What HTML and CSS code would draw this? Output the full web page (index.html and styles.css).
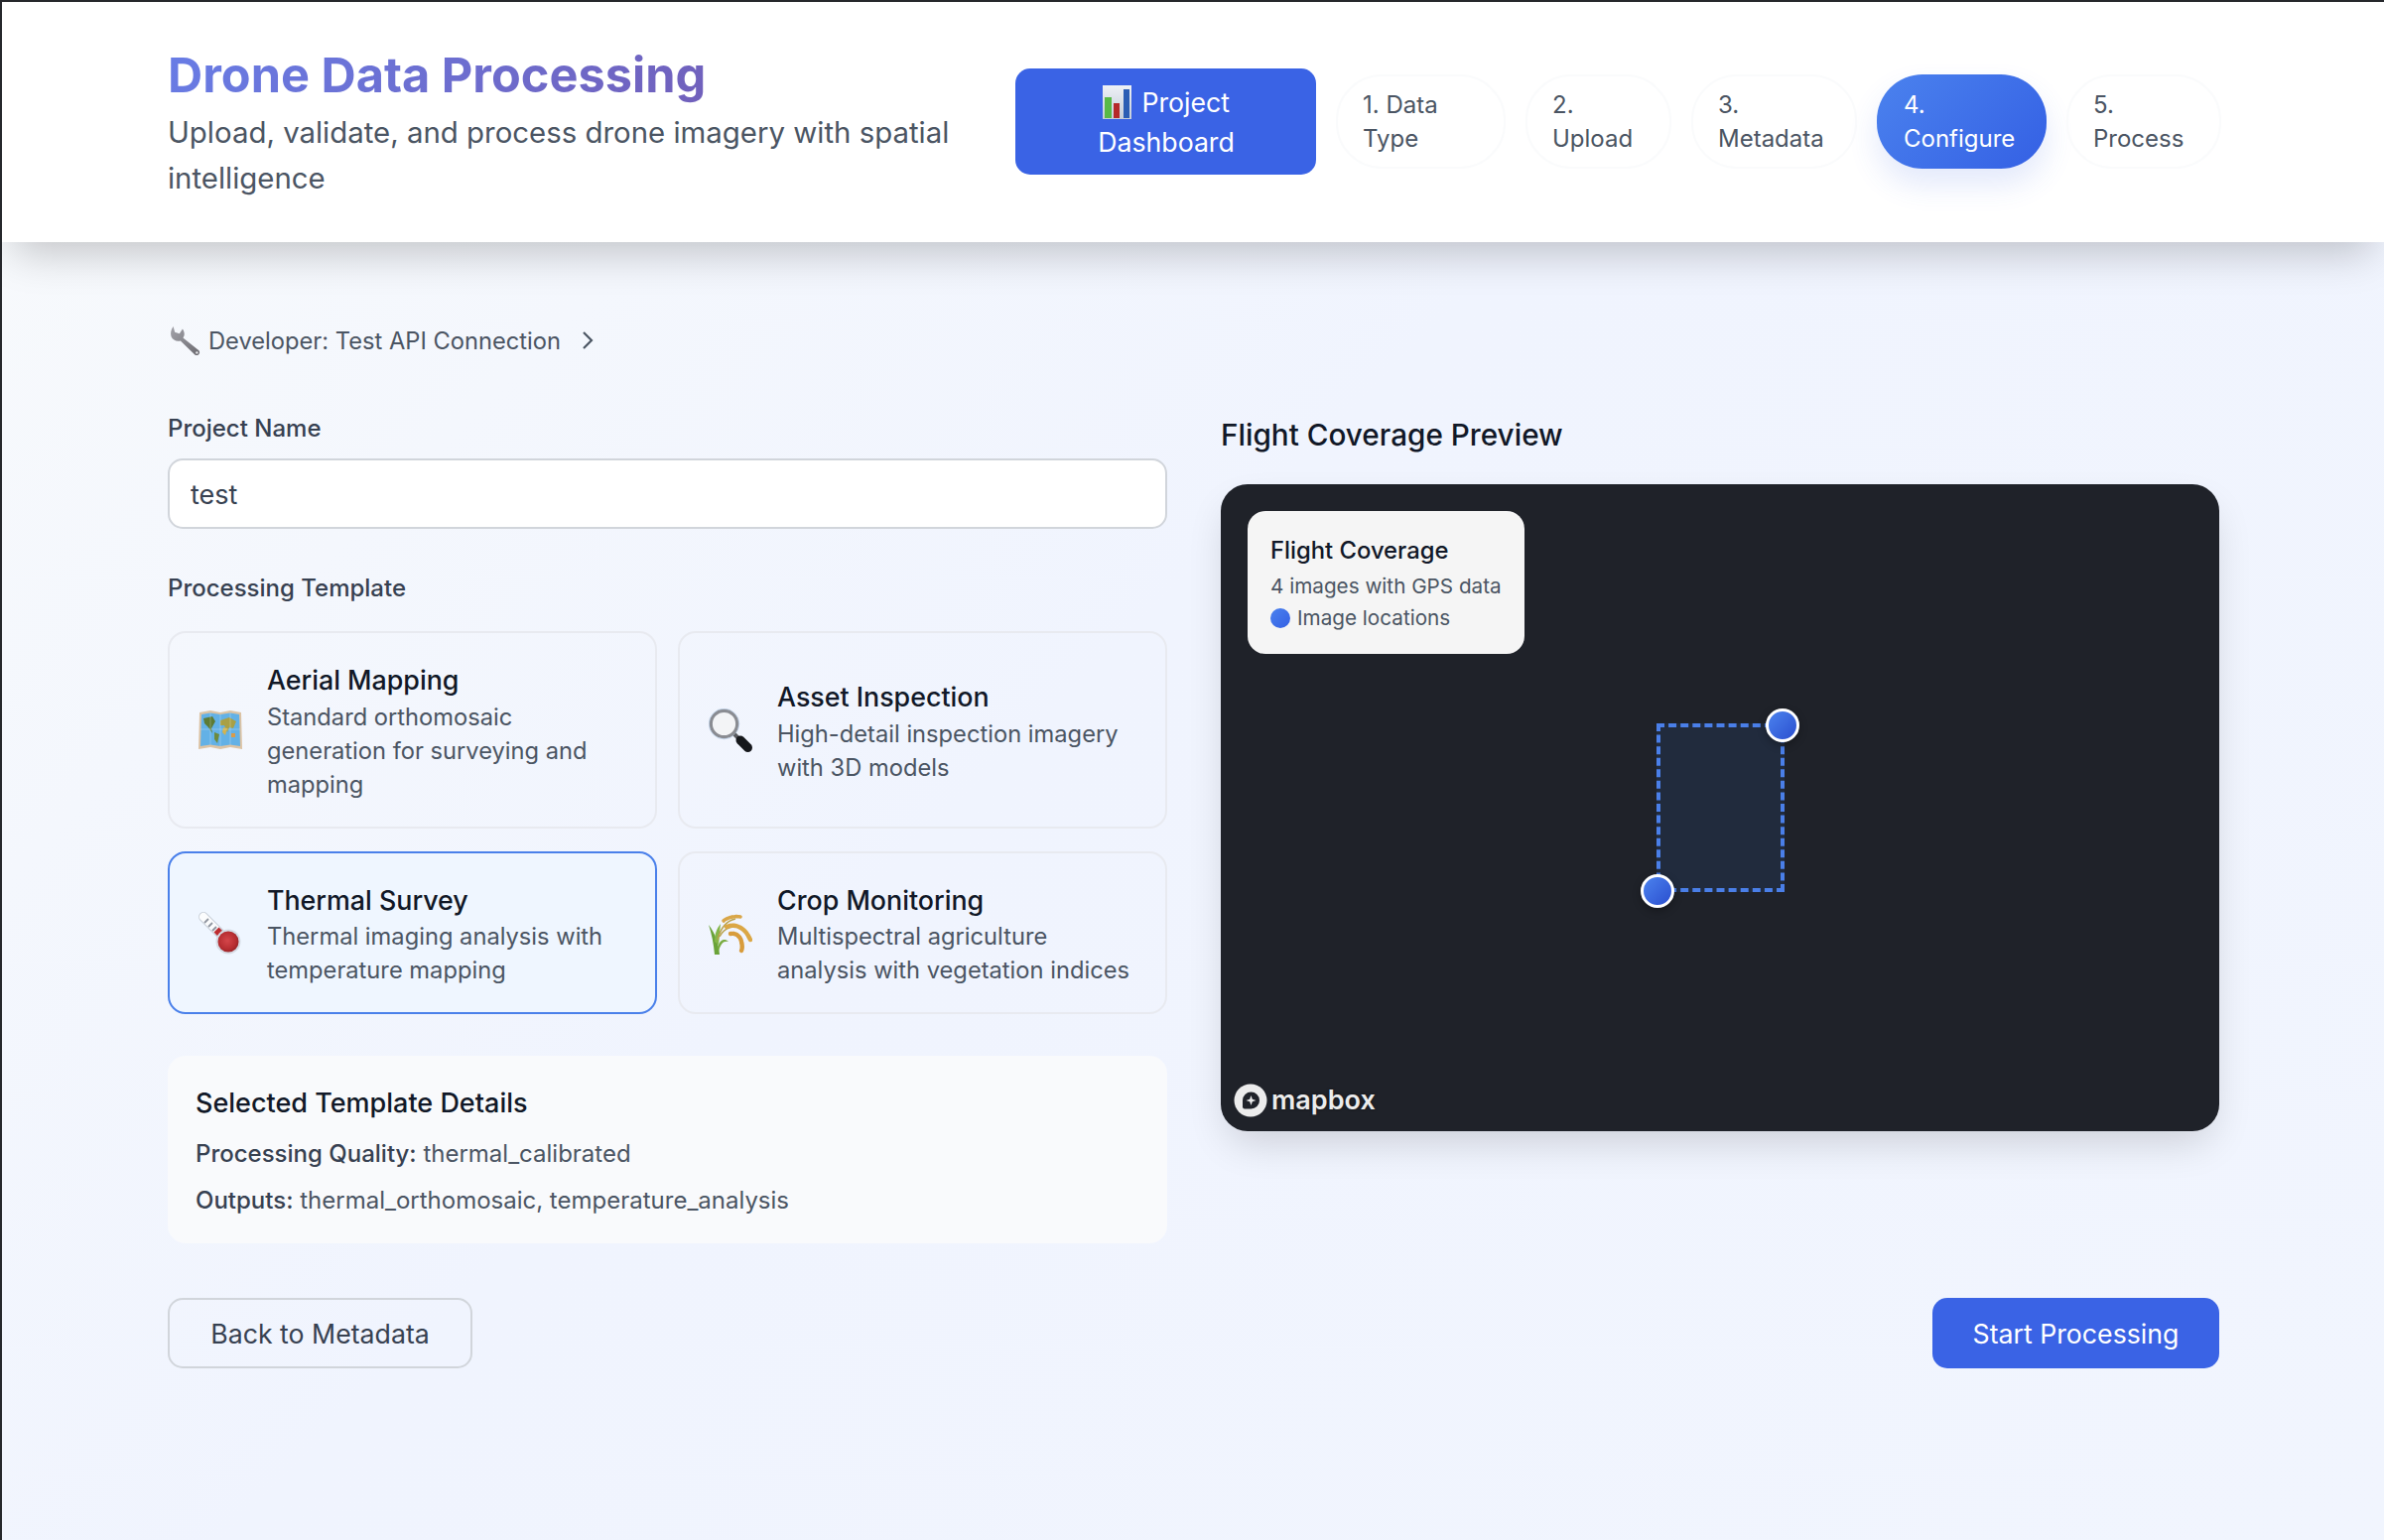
FILE: index.html
```html
<!DOCTYPE html>
<html lang="en">
<head>
    <meta charset="UTF-8">
    <meta name="viewport" content="width=device-width, initial-scale=1.0">
    <title>Drone Data Processing</title>
    <link rel="stylesheet" href="styles.css">
</head>
<body>

<header class="top-bar">
    <div class="brand">
        <h1>Drone Data Processing</h1>
        <p>Upload, validate, and process drone imagery with spatial intelligence</p>
    </div>
    <nav class="steps">
        <a class="dashboard-btn" href="#">
            <svg class="icon-chart" viewBox="0 0 29 34">
                <defs>
                    <linearGradient id="chartBg" x1="0" y1="0" x2="0" y2="1">
                        <stop offset="0" stop-color="#eef1f6"/>
                        <stop offset="1" stop-color="#c3ccd9"/>
                    </linearGradient>
                </defs>
                <rect width="29" height="34" fill="url(#chartBg)"/>
                <rect x="2" y="12" width="7" height="21" fill="#58b947"/>
                <rect x="11" y="18" width="6" height="15" fill="#b5282a"/>
                <rect x="21" y="4" width="6" height="29" fill="#2b5db4"/>
            </svg>
            Project<br>Dashboard
        </a>
        <a class="step" href="#">1. Data<br>Type</a>
        <a class="step" href="#">2.<br>Upload</a>
        <a class="step" href="#">3.<br>Metadata</a>
        <a class="step active" href="#">4.<br>Configure</a>
        <a class="step" href="#">5.<br>Process</a>
    </nav>
</header>

<main class="content">
    <div class="dev-toggle">
        <svg class="icon-wrench" viewBox="0 0 30 30">
            <defs>
                <linearGradient id="steel" x1="0" y1="0" x2="1" y2="1">
                    <stop offset="0" stop-color="#a3a3aa"/>
                    <stop offset="1" stop-color="#6b6a70"/>
                </linearGradient>
            </defs>
            <path d="M3.500 1 L5 6.500 L9.500 8 L12.500 3.500 C15 7 14.500 10.500 13 12 L28.500 24.500 Q30 27 28 28.500 Q26 30 24 28 L10.500 15 C7 16 3 14.500 1.500 11 C0.500 8 1 4 3.500 1Z" fill="url(#steel)"/>
            <circle cx="26.500" cy="26.500" r="1.200" fill="#e5e5e8"/>
        </svg>
        <span>Developer: Test API Connection</span>
        <svg class="chevron" viewBox="0 0 12 20">
            <path d="M2 2 L10 10 L2 18" fill="none" stroke="#4b5563" stroke-width="2.200"/>
        </svg>
    </div>

    <div class="columns">
        <section class="form-col">
            <label class="field-label" for="project-name">Project Name</label>
            <input class="text-input" id="project-name" type="text" value="test">

            <div class="field-label template-label">Processing Template</div>
            <div class="template-grid">
                <div class="template-card">
                    <svg class="template-icon" viewBox="0 0 44 44">
                        <path d="M1 4 L12 2 L22 4 L32 2 L43 4 L44 41 L32 39 L22 41 L12 39 L0 41Z" fill="#dcc3a4"/>
                        <path d="M3 6 L12 4.500 L22 6 L32 4.500 L41 6 L42 38 L32 36.500 L22 38 L12 36.500 L2 38Z" fill="#63b1e6"/>
                        <path d="M5 10 L14 8 L17 13 L13 20 L14 25 L10 19 L6 15Z" fill="#5d7b34"/>
                        <path d="M16 24 L21 26 L19 35 L16 31Z" fill="#6d8a3c"/>
                        <path d="M22 12 L31 9 L38 13 L35 20 L31 19 L29 24 L26 17 L22 17Z" fill="#a9a046"/>
                        <path d="M25 19 L29 20 L27 27 L24 24Z" fill="#d2b34f"/>
                        <path d="M33 25 L37 25 L37 29 L33 29Z" fill="#d99b4a"/>
                        <path d="M12 4.500 V36.500 M22 6 V38 M32 4.500 V36.500 M2 21 H42" stroke="#ffffff" stroke-opacity="0.25"/>
                    </svg>
                    <div>
                        <h4>Aerial Mapping</h4>
                        <p>Standard orthomosaic generation for surveying and mapping</p>
                    </div>
                </div>
                <div class="template-card">
                    <svg class="template-icon" viewBox="0 0 44 44">
                        <circle cx="15.500" cy="15.500" r="13.300" fill="#f3f4f6" stroke="#8a8c92" stroke-width="3.400"/>
                        <circle cx="15.500" cy="15.500" r="15.300" fill="none" stroke="#bcd0e8" stroke-width="0.800"/>
                        <path d="M26 26 L30 30" stroke="#5a5c61" stroke-width="4"/>
                        <path d="M32 32 L39.500 39.500" stroke="#15171b" stroke-width="9" stroke-linecap="round"/>
                    </svg>
                    <div>
                        <h4>Asset Inspection</h4>
                        <p>High-detail inspection imagery with 3D models</p>
                    </div>
                </div>
                <div class="template-card selected">
                    <svg class="template-icon" viewBox="0 0 44 44">
                        <defs>
                            <radialGradient id="bulb" cx="0.450" cy="0.450" r="0.600">
                                <stop offset="0" stop-color="#d4464a"/>
                                <stop offset="0.700" stop-color="#b62d31"/>
                                <stop offset="1" stop-color="#8f2226"/>
                            </radialGradient>
                        </defs>
                        <path d="M5 5 L27 27" stroke="#c9d0da" stroke-width="10" stroke-linecap="round"/>
                        <path d="M5 5 L18 18" stroke="#fbfcfd" stroke-width="8" stroke-linecap="round"/>
                        <path d="M6 11 L10 7 M10 15 L14 11 M14 19 L18 15" stroke="#8f95a0" stroke-width="1.800"/>
                        <path d="M18 18 L29 29" stroke="#bd2c30" stroke-width="7"/>
                        <circle cx="30" cy="30" r="12.500" fill="#d6dce5"/>
                        <circle cx="30" cy="30" r="10.500" fill="url(#bulb)"/>
                    </svg>
                    <div>
                        <h4>Thermal Survey</h4>
                        <p>Thermal imaging analysis with temperature mapping</p>
                    </div>
                </div>
                <div class="template-card">
                    <svg class="template-icon" viewBox="0 0 44 44">
                        <path d="M6 43 C5 32 3 22 0 13 C7 22 10 32 11 43Z" fill="#6aa339"/>
                        <path d="M6 30 C6 22 8 17 12 12 C11 20 11 26 10 33Z" fill="#84b648"/>
                        <path d="M9 36 C11 28 16 26 20 30 C15 29 12 32 10 40Z" fill="#79ac40"/>
                        <path d="M9 28 C12 16 18 9 27 7" fill="none" stroke="#b9a24c" stroke-width="1.400"/>
                        <path d="M11 25 C16 15 26 13 33 17" fill="none" stroke="#b9a24c" stroke-width="1.400"/>
                        <path d="M15 9 C20 5 27 4 32 5" fill="none" stroke="#d9a648" stroke-width="3.600" stroke-linecap="round" stroke-dasharray="2.500 0.800"/>
                        <path d="M18 15 C25 12 32 14 38 21 C40 24 41 26 42 28" fill="none" stroke="#dba745" stroke-width="4.400" stroke-linecap="round" stroke-dasharray="3 0.800"/>
                        <path d="M22 22 C28 21 32 25 33 30 C34 34 34 37 33 39" fill="none" stroke="#d89c3c" stroke-width="4.400" stroke-linecap="round" stroke-dasharray="3 0.800"/>
                    </svg>
                    <div>
                        <h4>Crop Monitoring</h4>
                        <p>Multispectral agriculture analysis with vegetation indices</p>
                    </div>
                </div>
            </div>

            <div class="template-details">
                <h4>Selected Template Details</h4>
                <p><strong>Processing Quality:</strong> thermal_calibrated</p>
                <p><strong>Outputs:</strong> thermal_orthomosaic, temperature_analysis</p>
            </div>
        </section>

        <section class="preview-col">
            <h3>Flight Coverage Preview</h3>
            <div class="map">
                <div class="map-panel">
                    <h5>Flight Coverage</h5>
                    <p>4 images with GPS data</p>
                    <p class="legend"><span class="legend-dot"></span>Image locations</p>
                </div>
                <div class="coverage-box"></div>
                <span class="marker marker-a"></span>
                <span class="marker marker-b"></span>
                <div class="map-logo">
                    <svg class="mapbox-mark" viewBox="0 0 34 34">
                        <circle cx="17" cy="17" r="16.500" fill="#ececec"/>
                        <path d="M9 17 A8.500 8.500 0 1 1 17.500 25.500 L11 25.500 Q9 25.500 9 23.500Z" fill="#1f2229"/>
                        <path d="M17.500 12 L18.800 15.700 L22.500 17 L18.800 18.300 L17.500 22 L16.200 18.300 L12.500 17 L16.200 15.700Z" fill="#ececec"/>
                    </svg>
                    <span>mapbox</span>
                </div>
            </div>
        </section>
    </div>

    <div class="actions">
        <button class="btn-secondary" type="button">Back to Metadata</button>
        <button class="btn-primary" type="button">Start Processing</button>
    </div>
</main>

</body>
</html>
```

FILE: styles.css
```css
* {
    box-sizing: border-box;
}
body {
    font-family: Inter, "Liberation Sans", sans-serif;
    margin: 0;
    min-height: 1552px;
    border-top: 2px solid #26282c;
    border-left: 2px solid #26282c;
    background: linear-gradient(135deg, #f8fafc 0%, #f0f4fe 45%, #f1f5fe 100%);
    color: #111827;
}
h1, h3, h4, h5, p {
    margin: 0;
}

/* Header */
.top-bar {
    position: relative;
    height: 242px;
    padding: 0 164px 2px 167px;
    display: flex;
    align-items: center;
    justify-content: space-between;
    background: #fff;
    box-shadow: 0 22px 40px -12px rgba(0, 0, 0, 0.22);
}
.brand {
    width: 820px;
    padding-top: 5px;
}
.brand h1 {
    font-size: 48.7px;
    line-height: 58px;
    font-weight: 700;
    margin-bottom: 6px;
    width: fit-content;
    background: linear-gradient(135deg, #687de6, #7160bb);
    -webkit-background-clip: text;
    background-clip: text;
    color: transparent;
}
.brand p {
    font-size: 29.4px;
    line-height: 46px;
    color: #4b5563;
}
.steps {
    display: grid;
    grid-template-columns: 303px 171px 147px 167px 171px 156px;
    column-gap: 20px;
    align-items: center;
}
.steps a {
    text-decoration: none;
}
.dashboard-btn {
    height: 107px;
    padding: 14px 0 0 1px;
    border-radius: 15px;
    background: #3a63e5;
    color: #fff;
    font-size: 26.7px;
    line-height: 40px;
    text-align: center;
}
.icon-chart {
    width: 29px;
    height: 34px;
    vertical-align: -7px;
    margin-right: 3px;
}
.step {
    height: 95px;
    padding: 12px 25px;
    border: 2px solid #fafbfc;
    border-radius: 46px;
    color: #4b5563;
    font-size: 24px;
    line-height: 34px;
}
.step.active {
    border-color: transparent;
    background: linear-gradient(135deg, #4b82ee, #3460e4) border-box;
    color: #fff;
    box-shadow: 0 16px 30px rgba(59, 99, 229, 0.14);
}

/* Main */
.content {
    padding: 82px 166px 0 167px;
}
.dev-toggle {
    display: flex;
    align-items: center;
    height: 34px;
    margin-bottom: 55px;
    font-size: 23.7px;
    color: #4b5563;
}
.icon-wrench {
    width: 31px;
    height: 31px;
    margin: 0 8px 0 2px;
}
.chevron {
    width: 12px;
    height: 20px;
    margin-left: 21px;
}
.columns {
    display: grid;
    grid-template-columns: 1007px 1006px;
    column-gap: 54px;
}
.field-label {
    display: block;
    font-size: 24px;
    line-height: 34px;
    font-weight: 500;
    color: #374151;
    margin-bottom: 13px;
}
.template-label {
    margin: 43px 0 26px;
}
.text-input {
    display: block;
    width: 100%;
    height: 71px;
    padding: 2px 21px 0;
    border: 2px solid #d1d5db;
    border-radius: 15px;
    background: #fff;
    font-family: inherit;
    font-size: 27px;
    color: #374151;
}
.template-grid {
    display: grid;
    grid-template-columns: 1fr 1fr;
    gap: 23px 21px;
}
.template-card {
    display: flex;
    align-items: center;
    padding: 27px 28px 25px 29px;
    border: 2px solid #e8eaf0;
    border-radius: 18px;
}
.template-card.selected {
    border-color: #4a80ea;
    background: #eff6ff;
}
.template-icon {
    flex: none;
    width: 44px;
    height: 44px;
    margin-right: 25px;
}
.template-card h4 {
    font-size: 26.8px;
    line-height: 40.5px;
    font-weight: 500;
    color: #111827;
}
.template-card p {
    font-size: 23.7px;
    line-height: 34px;
    color: #4b5563;
}
.template-details {
    margin-top: 42px;
    padding: 28px 28px 26px;
    border-radius: 18px;
    background: #f9fafc;
}
.template-details h4 {
    font-size: 27px;
    line-height: 40px;
    font-weight: 500;
    margin-bottom: 14px;
}
.template-details p {
    font-size: 24px;
    line-height: 34px;
    color: #4b5563;
    margin-bottom: 13px;
}
.template-details p:last-child {
    margin-bottom: 0;
}
.template-details strong {
    font-weight: 500;
    color: #374151;
}

/* Map preview */
.preview-col h3 {
    font-size: 29.7px;
    line-height: 46px;
    font-weight: 500;
    margin-bottom: 27px;
}
.map {
    position: relative;
    height: 652px;
    border-radius: 27px;
    background: #1f2229;
    box-shadow: 0 18px 40px -8px rgba(0, 0, 0, 0.16);
}
.map-panel {
    position: absolute;
    left: 27px;
    top: 27px;
    width: 279px;
    height: 144px;
    padding: 22px 23px 0;
    border-radius: 18px;
    background: #f5f5f5;
}
.map-panel h5 {
    font-size: 23.8px;
    line-height: 36px;
    font-weight: 500;
    margin-bottom: 2px;
}
.map-panel p {
    font-size: 20.7px;
    line-height: 32px;
    color: #4b5563;
}
.legend {
    display: flex;
    align-items: center;
}
.legend-dot {
    width: 20px;
    height: 20px;
    margin-right: 7px;
    border-radius: 50%;
    background: linear-gradient(135deg, #4b82ee, #3460e4);
}
.coverage-box {
    position: absolute;
    left: 439px;
    top: 241px;
    width: 129px;
    height: 170px;
    border: 4px dashed #4a7fe8;
    background: rgba(59, 130, 246, 0.1);
}
.marker {
    position: absolute;
    width: 34px;
    height: 34px;
    border: 3px solid #fff;
    border-radius: 50%;
    background: linear-gradient(135deg, #4b82ee, #2b4fcf);
    box-shadow: 0 3px 9px rgba(0, 0, 0, 0.3);
}
.marker-a {
    left: 549px;
    top: 226px;
}
.marker-b {
    left: 423px;
    top: 393px;
}
.map-logo {
    position: absolute;
    left: 13px;
    bottom: 14px;
    display: flex;
    align-items: center;
    gap: 4px;
    color: #ececec;
    font-size: 27px;
    line-height: 34px;
    font-weight: 600;
    text-shadow: 0 0 3px rgba(0, 0, 0, 0.6);
}
.mapbox-mark {
    width: 34px;
    height: 34px;
}

/* Buttons */
.actions {
    display: flex;
    justify-content: space-between;
    margin-top: 55px;
}
.actions button {
    height: 71px;
    font-family: inherit;
    font-size: 26.7px;
    border-radius: 15px;
    cursor: pointer;
}
.btn-secondary {
    width: 307px;
    border: 2px solid #d1d5db;
    background: transparent;
    color: #374151;
}
.btn-primary {
    width: 289px;
    border: none;
    background: #3a63e5;
    color: #fff;
}
```
